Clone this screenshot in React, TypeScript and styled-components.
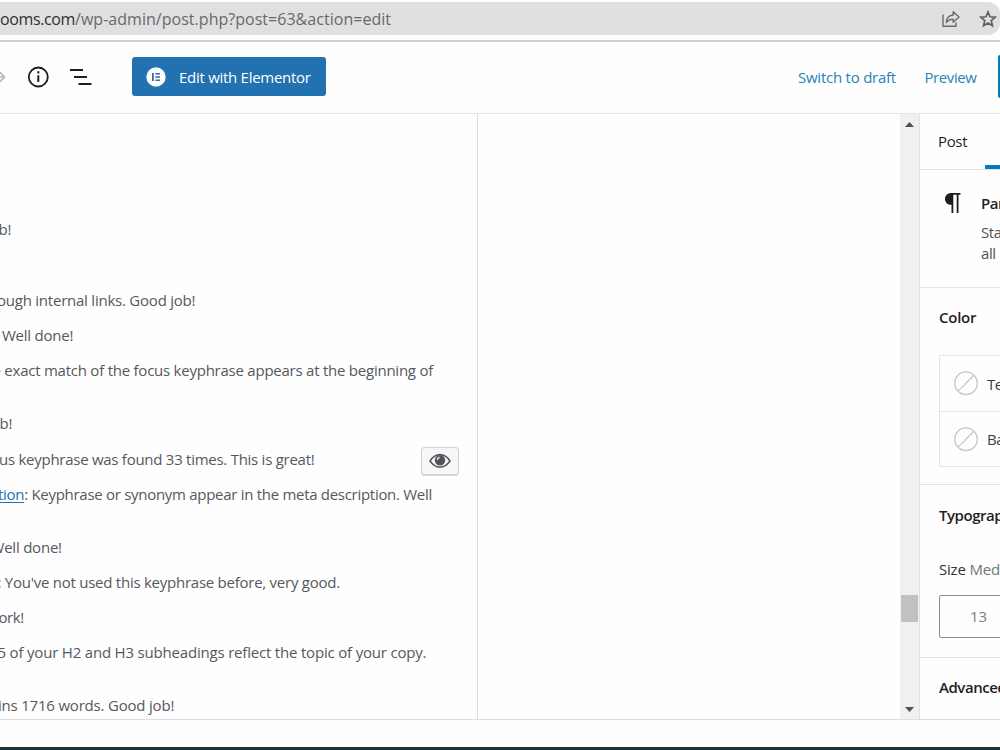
import React from "react";
import styled, { createGlobalStyle } from "styled-components";

const Global = createGlobalStyle`
  * { box-sizing: border-box; }
  body { margin: 0; background: #fefefe; overflow: hidden; }
  button, p, ul, h2 { margin: 0; padding: 0; font: inherit; }
  svg { flex: none; }
`;

const Page = styled.div`
  width: 1000px;
  height: 750px;
  overflow: hidden;
  display: flex;
  flex-direction: column;
  background: #fefefe;
  color: #1e1e1e;
  font: 15px/20px "Open Sans", "Noto Sans", sans-serif;
  white-space: nowrap;
`;

const BrowserBar = styled.div`
  height: 42px;
  flex: none;
  padding-top: 2px;
  background: #fefefe;
  border-bottom: 2px solid #cfcfcf;
`;

const AddressBar = styled.div`
  display: flex;
  align-items: center;
  height: 33px;
  background: #e0e0e0;
  border-radius: 0 12px 12px 0;
`;

const Url = styled.div`
  flex: 1;
  font-size: 16px;
  letter-spacing: 0.03px;
  color: #68696b;
`;

const Host = styled.span`
  display: inline-block;
  width: 75px;
  letter-spacing: -0.38px;
  color: #2f3033;
`;

const BarIcons = styled.div`
  display: flex;
  align-items: center;
  gap: 18px;
  margin-right: 3px;
`;

const Header = styled.header`
  display: flex;
  align-items: center;
  height: 72px;
  flex: none;
  padding-bottom: 2px;
  border-bottom: 1px solid #e2e4e5;
`;

const ToolIcons = styled.div`
  display: flex;
  align-items: center;
  width: 132px;
  height: 40px;
`;

const ElementorButton = styled.button`
  display: flex;
  align-items: center;
  width: 194px;
  height: 39px;
  padding-left: 14px;
  gap: 13px;
  border: 0;
  border-radius: 3px;
  background: #2271b1;
  color: #fff;
  letter-spacing: -0.28px;
`;

const HeaderActions = styled.div`
  display: flex;
  align-items: center;
  margin-left: auto;
  color: #2b82b8;
`;

const Action = styled.a<{ $width: number; $spacing: number }>`
  width: ${(p) => p.$width}px;
  letter-spacing: ${(p) => p.$spacing}px;
`;

const PublishEdge = styled.div`
  width: 2px;
  height: 43px;
  background: #007cba;
  border-radius: 3px 0 0 3px;
`;

const Body = styled.div`
  display: flex;
  height: 606px;
  flex: none;
  border-bottom: 1px solid #dcdedf;
`;

const Analysis = styled.div`
  display: flex;
  width: 478px;
  padding-top: 107px;
  border-right: 1px solid #dadcdd;
  overflow: hidden;
`;

const Results = styled.ul`
  list-style: none;
  width: 421px;
  flex: none;
  color: #55595d;
  line-height: 17.65px;
`;

const Result = styled.li<{ $rows: number; $start: number; $spacing: number }>`
  height: ${(p) => p.$rows * 17.65}px;
  margin-left: ${(p) => p.$start}px;
  letter-spacing: ${(p) => p.$spacing}px;
`;

const ResultLink = styled.a`
  color: #2271b1;
  text-decoration: underline;
  text-underline-offset: 2px;
`;

const EyeButton = styled.button`
  display: flex;
  justify-content: center;
  align-items: center;
  width: 38px;
  height: 29px;
  margin-top: 226px;
  padding: 0 1px 1px 0;
  border: 1px solid #d4d4d4;
  border-bottom-width: 2px;
  border-radius: 4px;
  background: #f7f7f7;
`;

const Canvas = styled.div`
  flex: 1;
`;

const ScrollTrack = styled.div`
  display: flex;
  flex-direction: column;
  align-items: center;
  justify-content: space-between;
  width: 19px;
  padding: 8px 0 7px;
  background: #f0f0f0;
`;

const ScrollThumb = styled.div`
  width: 17px;
  height: 27px;
  margin: 468px 0 auto;
  background: #c1c1c1;
`;

const Sidebar = styled.aside`
  width: 81px;
  flex: none;
  overflow: hidden;
  border-left: 1px solid #dfe1e2;
`;

const Tabs = styled.div`
  display: flex;
  height: 56px;
  padding-left: 18px;
  border-bottom: 1px solid #e0e2e3;
`;

const Tab = styled.div`
  width: 47px;
  flex: none;
  padding-top: 17px;
  font-weight: 500;
  letter-spacing: -0.35px;
`;

const ActiveTab = styled.div`
  width: 60px;
  flex: none;
  height: 55px;
  border-bottom: 4px solid #007cba;
`;

const Panel = styled.section<{ $height: number; $top: number }>`
  height: ${(p) => p.$height}px;
  padding: ${(p) => p.$top}px 0 0 19px;
  border-bottom: 1px solid #e0e2e3;
`;

const PanelTitle = styled.h2<{ $spacing?: number }>`
  font-size: 15px;
  font-weight: 600;
  line-height: 20px;
  letter-spacing: ${(p) => p.$spacing ?? -0.25}px;
`;

const BlockCard = styled(Panel)`
  display: flex;
  gap: 20px;
  padding-left: 24px;
`;

const BlockText = styled.p`
  padding-top: 9px;
  line-height: 21px;
  letter-spacing: -0.4px;
  color: #50524f;
`;

const Swatches = styled.div`
  width: 200px;
  margin-top: 28px;
  border: 1px solid #e3e5e5;
`;

const Swatch = styled.div`
  display: flex;
  align-items: center;
  gap: 8px;
  height: 55px;
  padding-left: 14px;
  color: #3c3c3c;
  letter-spacing: -0.4px;
  & + & { border-top: 1px solid #e6e9e9; }
`;

const SizeLabel = styled.div`
  margin-top: 34px;
  letter-spacing: -0.2px;
  color: #333;
  span { color: #757575; }
`;

const SizeField = styled.div`
  display: flex;
  align-items: center;
  width: 120px;
  height: 43px;
  margin-top: 16px;
  padding: 0 0 2px 30px;
  border: 1px solid #8c8c8c;
  border-radius: 2px;
  color: #7b7d7f;
`;

const Footer = styled.footer`
  flex: 1;
  border-bottom: 3px solid #18343a;
`;

const NoColor = () => (
  <svg width="25" height="25" viewBox="0 0 25 25" fill="none" stroke="#c6c6c6" strokeWidth="1.3">
    <circle cx="12" cy="12.2" r="11.3" />
    <path d="M4.300 19.900 19.700 4.500" />
  </svg>
);

type Item = { text: string; link?: string; start: number; spacing: number; rows: number };

const results: Item[] = [
  { text: "b!", start: -1.5, spacing: -0.3, rows: 4 },
  { text: "ough internal links. Good job!", start: -3, spacing: -0.23, rows: 2 },
  { text: "Well done!", start: 2, spacing: -0.24, rows: 2 },
  { text: "e exact match of the focus keyphrase appears at the beginning of", start: -7.5, spacing: -0.238, rows: 3 },
  { text: "b!", start: -0.5, spacing: -0.3, rows: 2.03 },
  { text: "us keyphrase was found 33 times. This is great!", start: -1, spacing: -0.265, rows: 1.97 },
  { text: ": Keyphrase or synonym appear in the meta description. Well", link: "tion", start: -2, spacing: -0.29, rows: 3 },
  { text: "Well done!", start: -9.5, spacing: -0.22, rows: 2 },
  { text: ": You've not used this keyphrase before, very good.", start: -2.5, spacing: -0.25, rows: 2 },
  { text: "ork!", start: -1.5, spacing: -0.4, rows: 1.98 },
  { text: "5 of your H2 and H3 subheadings reflect the topic of your copy.", start: -2.5, spacing: -0.19, rows: 3.02 },
  { text: "ins 1716 words. Good job!", start: -2, spacing: -0.2, rows: 1 },
];

export default function App() {
  return (
    <Page>
      <Global />
      <BrowserBar>
        <AddressBar>
          <Url><Host>ooms.com</Host>/wp-admin/post.php?post=63&amp;action=edit</Url>
          <BarIcons>
            <svg width="20" height="18" viewBox="0 0 20 18" fill="none" stroke="#6a6a6a" strokeWidth="1.4" strokeLinejoin="round">
              <path d="M2 4.5V16.3H15V12.5" />
              <path d="M5.3 12.5C5.7 8 8 5.2 12.2 5V1.8L18 7l-5.800 5.200V9.200C9 9.200 7 10.200 5.300 12.500Z" />
            </svg>
            <svg width="18" height="18" viewBox="0 0 18 18" fill="none" stroke="#606060" strokeWidth="1.7">
              <path d="m9 2 2 4.800 5.200.45-3.950 3.400 1.200 5.050L9 13l-4.450 2.700 1.200-5.050L1.800 7.250 7 6.800Z" />
            </svg>
          </BarIcons>
        </AddressBar>
      </BrowserBar>
      <Header>
        <ToolIcons>
          <svg width="100" height="40" viewBox="0 0 100 40" fill="none">
            <path d="M-3 15.500 0 15.300 4.500 20 0 24.700M-3 20H4" stroke="#b5b5b5" strokeWidth="1.6" />
            <circle cx="38.300" cy="20" r="9.500" stroke="#1e1e1e" strokeWidth="1.8" />
            <path d="M38.300 18.300v6.700M38.300 14.300v2.200" stroke="#1e1e1e" strokeWidth="2" />
            <path d="M70 13h13M74 20h13M78.500 27H91.500" stroke="#1e1e1e" strokeWidth="1.900" />
          </svg>
        </ToolIcons>
        <ElementorButton>
          <svg width="20" height="20" viewBox="0 0 20 20">
            <circle cx="10" cy="10" r="9.700" fill="#fff" />
            <path d="M6 6h1.800v8H6zM9.400 6H14v1.500H9.400zM9.400 9.200H14v1.500H9.400zM9.400 12.500H14V14H9.400z" fill="#3b68a8" />
          </svg>
          Edit with Elementor
        </ElementorButton>
        <HeaderActions>
          <Action $width={126.5} $spacing={-0.24}>Switch to draft</Action>
          <Action $width={73.500} $spacing={-0.42}>Preview</Action>
          <PublishEdge />
        </HeaderActions>
      </Header>
      <Body>
        <Analysis>
          <Results>
            {results.map((r, i) => (
              <Result key={i} $rows={r.rows} $start={r.start} $spacing={r.spacing}>
                {r.link && <ResultLink>{r.link}</ResultLink>}
                {r.text}
              </Result>
            ))}
          </Results>
          <EyeButton aria-label="Highlight">
            <svg width="22" height="16" viewBox="0 0 22 16">
              <path d="M1 8C4.500 2.800 7.500 1.600 11 1.600S17.500 2.800 21 8c-3.500 5-6.500 6.200-10 6.200S4.500 13 1 8Z" fill="none" stroke="#50535a" strokeWidth="1.500" />
              <circle cx="11" cy="7.300" r="5.200" fill="#50535a" />
              <path d="M8.400 7C8.300 5.300 9.300 4.400 10.800 4.300" fill="none" stroke="#e8e8e8" strokeWidth="1.300" />
            </svg>
          </EyeButton>
        </Analysis>
        <Canvas />
        <ScrollTrack>
          <svg width="9" height="5" viewBox="0 0 9 5"><path d="M0 5 4.500 0 9 5Z" fill="#505050" /></svg>
          <ScrollThumb />
          <svg width="9" height="5" viewBox="0 0 9 5"><path d="M0 0 4.500 5 9 0Z" fill="#505050" /></svg>
        </ScrollTrack>
        <Sidebar>
          <Tabs>
            <Tab>Post</Tab>
            <ActiveTab />
          </Tabs>
          <BlockCard $height={118} $top={23}>
            <svg width="17" height="21" viewBox="0 0 17 21">
              <path d="M7.500 0H16.500V1.700H14.500V20H12.700V1.700H9.300V20H7.500V11.800C3.500 11.800 1 9.300 1 5.900S3.500 0 7.500 0Z" fill="#1e1e1e" />
            </svg>
            <div>
              <PanelTitle $spacing={-0.5}>Paragraph</PanelTitle>
              <BlockText>Start with<br />all narrative</BlockText>
            </div>
          </BlockCard>
          <Panel $height={197} $top={19}>
            <PanelTitle>Color</PanelTitle>
            <Swatches>
              <Swatch><NoColor />Text</Swatch>
              <Swatch><NoColor />Background</Swatch>
            </Swatches>
          </Panel>
          <Panel $height={173} $top={20}>
            <PanelTitle $spacing={-0.45}>Typography</PanelTitle>
            <SizeLabel>Size <span>Medium</span></SizeLabel>
            <SizeField>13</SizeField>
          </Panel>
          <Panel $height={90} $top={19}>
            <PanelTitle $spacing={-0.45}>Advanced</PanelTitle>
          </Panel>
        </Sidebar>
      </Body>
      <Footer />
    </Page>
  );
}
